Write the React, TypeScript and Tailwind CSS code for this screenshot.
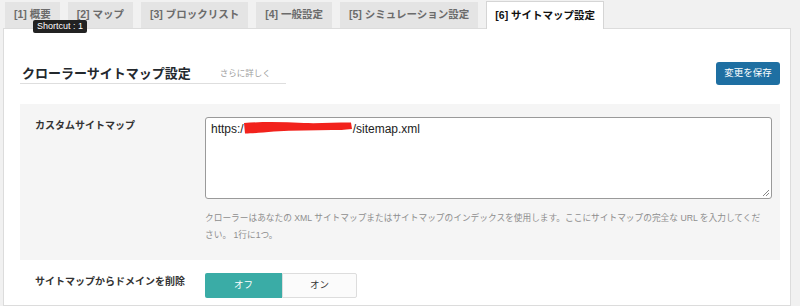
import React from "react";

const jp = { fontFamily: '"Liberation Sans", "Noto Sans CJK JP", sans-serif' };

function Tab({ label, active }: { label: string; active?: boolean }) {
  return active ? (
    <div className="relative -mb-px flex h-[28px] items-center border border-b-0 border-[#d5d5d5] bg-white px-[8px] text-[10.5px] font-bold text-[#111]">
      {label}
    </div>
  ) : (
    <div className="flex h-[26px] items-center bg-[#e4e4e4] px-[9px] text-[10.5px] font-semibold text-[#6b6b6b]">
      {label}
    </div>
  );
}

export default function App() {
  return (
    <div style={jp} className="flex h-[306px] w-[800px] flex-col overflow-hidden bg-[#f1f1f1] pl-[3px] pr-[9px]">
      <div className="relative flex items-end gap-[8px] pl-[2px] pt-[1px]">
        <Tab label="[1] 概要" />
        <Tab label="[2] マップ" />
        <Tab label="[3] ブロックリスト" />
        <Tab label="[4] 一般設定" />
        <Tab label="[5] シミュレーション設定" />
        <Tab label="[6] サイトマップ設定" active />
        <div className="absolute left-[30px] top-[20px] z-10 rounded-[2px] bg-[#222] px-[4px] py-[1px] text-[9px] leading-[11px] text-white">
          Shortcut : 1
        </div>
      </div>
      <div className="flex-1 border border-[#dcdcdc] bg-white pl-[16px] pr-[10px]">
        <div className="flex items-start justify-between pt-[33px]">
          <div className="mt-[2px] flex w-[266px] items-center border-b border-[#dedede] pl-[2px] leading-[19px]">
            <span className="text-[13px] font-bold text-[#23282d]">クローラーサイトマップ設定</span>
            <span className="ml-[29px] text-[8.5px] text-[#a0a0a0]">さらに詳しく</span>
          </div>
          <button className="h-[23px] w-[64px] rounded-[3px] bg-[#1e6fa2] text-[9.5px] text-white">変更を保存</button>
        </div>

        <div className="mt-[19px] flex bg-[#f5f5f5] pb-[16px] pr-[8px] pt-[13px]">
          <div className="w-[185px] shrink-0 pl-[15px] text-[10px] font-bold leading-[18px] text-[#333]">
            カスタムサイトマップ
          </div>
          <div className="flex-1">
            <div className="relative h-[82px] rounded-[3px] border border-[#9a9a9a] bg-white px-[5px] pt-[3px] text-[12px] leading-[16px] text-[#222]">
              <div className="flex items-center">
                <span>https:/</span>
                <span className="inline-block h-[16px] w-[109px]">
                  <svg width="109" height="16" viewBox="0 0 109 16">
                    <path
                      d="M0 2 C 20 0.5, 40 1, 60 2 C 75 2.5, 90 1.5, 107 1.5 L 108 8 C 100 9, 95 9, 88 9 C 70 9.5, 50 9, 30 10.5 C 18 11.5, 8 12.5, 1 12.5 Z"
                      fill="#f2221c"
                    />
                  </svg>
                </span>
                <span>/sitemap.xml</span>
              </div>
              <svg className="absolute bottom-[1px] right-[1px]" width="8" height="8" viewBox="0 0 8 8">
                <path d="M7 1 L1 7 M7 4 L4 7" stroke="#888" strokeWidth="1" />
              </svg>
            </div>
            <div className="mt-[11px] whitespace-nowrap text-[8.7px] leading-[17px] text-[#8e8e8e]">
              クローラーはあなたの XML サイトマップまたはサイトマップのインデックスを使用します。ここにサイトマップの完全な URL を入力してくだ
              <br />
              さい。 1行に1つ。
            </div>
          </div>
        </div>

        <div className="mt-[13px] flex">
          <div className="w-[185px] shrink-0 pl-[15px] text-[10px] font-bold leading-[18px] text-[#333]">
            サイトマップからドメインを削除
          </div>
          <div className="flex h-[25px] w-[152px] text-[9.5px]">
            <div className="flex w-[77px] items-center justify-center rounded-l-[2px] bg-[#3aaca6] text-white">オフ</div>
            <div className="flex flex-1 items-center justify-center rounded-r-[2px] border border-[#dddddd] bg-[#fbfbfb] text-[#333]">オン</div>
          </div>
        </div>
      </div>
    </div>
  );
}
